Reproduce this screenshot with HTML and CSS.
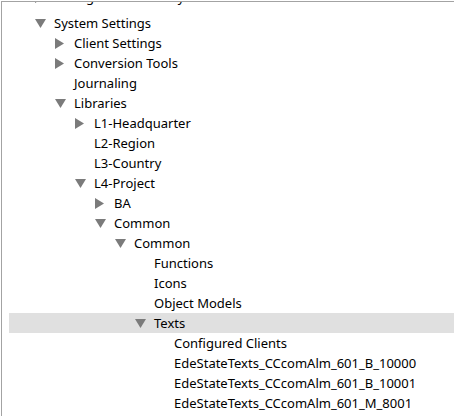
FILE: index.html
```html
<!DOCTYPE html>
<html>
<head>
<meta charset="utf-8">
<link rel="stylesheet" href="styles.css">
</head>
<body>
<div class="tree">
  <div class="clip"><div class="row l0 ghost"><span class="tg"><svg class="right" viewBox="0 0 9 11"><polygon points="0,0 9,5.5 0,11"/></svg></span><span class="lbl">Configuration Library</span></div></div>
  <div class="row l0"><span class="tg"><svg class="down" viewBox="0 0 11 9"><polygon points="0,0 11,0 5.5,9"/></svg></span><span class="lbl">System Settings</span></div>
  <div class="row l1"><span class="tg"><svg class="right" viewBox="0 0 9 11"><polygon points="0,0 9,5.5 0,11"/></svg></span><span class="lbl">Client Settings</span></div>
  <div class="row l1"><span class="tg"><svg class="right" viewBox="0 0 9 11"><polygon points="0,0 9,5.5 0,11"/></svg></span><span class="lbl">Conversion Tools</span></div>
  <div class="row l1"><span class="tg"></span><span class="lbl">Journaling</span></div>
  <div class="row l1"><span class="tg"><svg class="down" viewBox="0 0 11 9"><polygon points="0,0 11,0 5.5,9"/></svg></span><span class="lbl">Libraries</span></div>
  <div class="row l2"><span class="tg"><svg class="right" viewBox="0 0 9 11"><polygon points="0,0 9,5.5 0,11"/></svg></span><span class="lbl">L1-Headquarter</span></div>
  <div class="row l2"><span class="tg"></span><span class="lbl">L2-Region</span></div>
  <div class="row l2"><span class="tg"></span><span class="lbl">L3-Country</span></div>
  <div class="row l2"><span class="tg"><svg class="down" viewBox="0 0 11 9"><polygon points="0,0 11,0 5.5,9"/></svg></span><span class="lbl">L4-Project</span></div>
  <div class="row l3"><span class="tg"><svg class="right" viewBox="0 0 9 11"><polygon points="0,0 9,5.5 0,11"/></svg></span><span class="lbl">BA</span></div>
  <div class="row l3"><span class="tg"><svg class="down" viewBox="0 0 11 9"><polygon points="0,0 11,0 5.5,9"/></svg></span><span class="lbl">Common</span></div>
  <div class="row l4"><span class="tg"><svg class="down" viewBox="0 0 11 9"><polygon points="0,0 11,0 5.5,9"/></svg></span><span class="lbl">Common</span></div>
  <div class="row l5"><span class="tg"></span><span class="lbl">Functions</span></div>
  <div class="row l5"><span class="tg"></span><span class="lbl">Icons</span></div>
  <div class="row l5"><span class="tg"></span><span class="lbl">Object Models</span></div>
  <div class="row l5 selected"><span class="tg"><svg class="down" viewBox="0 0 11 9"><polygon points="0,0 11,0 5.5,9"/></svg></span><span class="lbl">Texts</span></div>
  <div class="row l6"><span class="tg"></span><span class="lbl">Configured Clients</span></div>
  <div class="row l6"><span class="tg"></span><span class="lbl">EdeStateTexts_CCcomAlm_601_B_10000</span></div>
  <div class="row l6"><span class="tg"></span><span class="lbl">EdeStateTexts_CCcomAlm_601_B_10001</span></div>
  <div class="row l6"><span class="tg"></span><span class="lbl">EdeStateTexts_CCcomAlm_601_M_8001</span></div>
</div>
</body>
</html>
```

FILE: styles.css
```css
html, body {
  margin: 0;
  padding: 0;
  background: #ffffff;
}
body {
  width: 454px;
  height: 416px;
  overflow: hidden;
  font-family: "Noto Sans", "Open Sans", sans-serif;
  font-size: 13px;
  color: #000000;
}
.tree {
  margin: 1px 0 0 1px;
  border-top: 1px solid #a3a3a3;
  border-left: 1px solid #a3a3a3;
  height: 414px;
  overflow: hidden;
  padding-left: 7px;
}
.clip {
  height: 11px;
  overflow: hidden;
}
.ghost {
  margin-top: -15px;
}
.row {
  display: flex;
  align-items: center;
  height: 20px;
  white-space: nowrap;
}
.row.selected {
  background: #e0e0e0;
}
.tg {
  flex: 0 0 20px;
  width: 20px;
  height: 20px;
  display: flex;
  align-items: center;
  padding-left: 1px;
  box-sizing: border-box;
}
.tg svg {
  fill: #7b7b7b;
  display: block;
}
.tg .down {
  width: 11px;
  height: 9px;
}
.tg .right {
  width: 9px;
  height: 11px;
  margin-top: 1px;
}
.lbl {
  line-height: 20px;
}
.l0 { padding-left: 25px; }
.l1 { padding-left: 45px; }
.l2 { padding-left: 65px; }
.l3 { padding-left: 85px; }
.l4 { padding-left: 105px; }
.l5 { padding-left: 125px; }
.l6 { padding-left: 145px; }
```
